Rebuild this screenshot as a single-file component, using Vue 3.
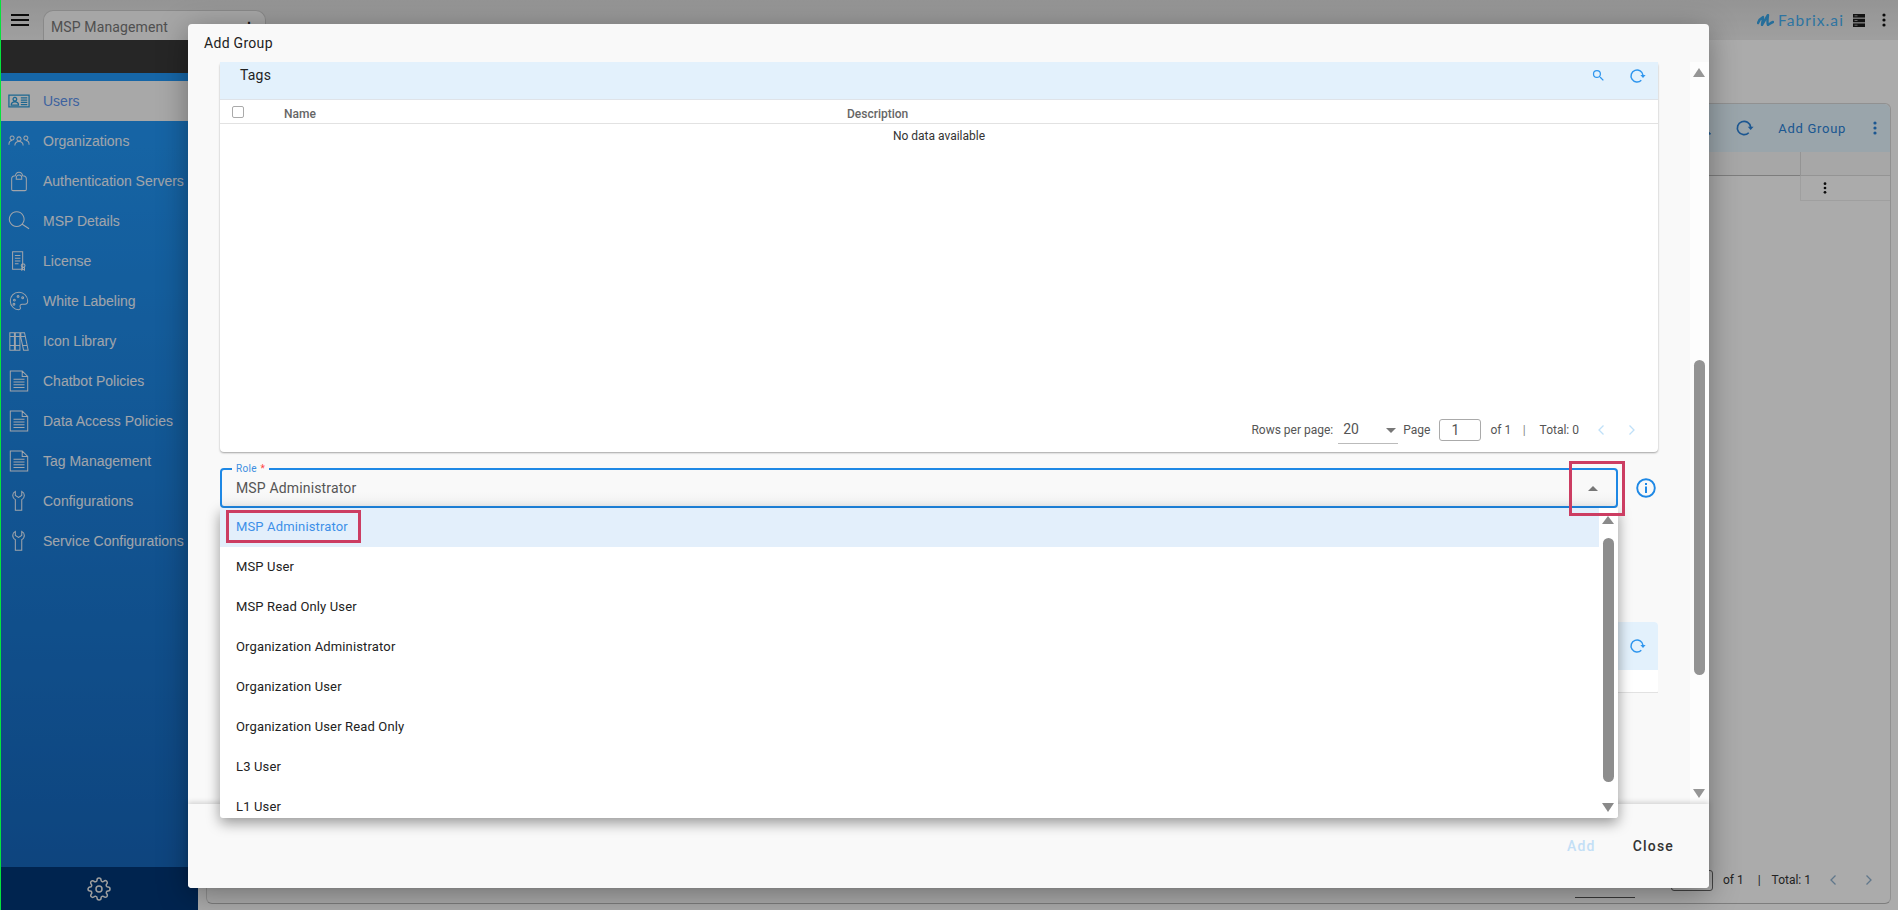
<script setup>
const menu = [
  { label: 'Users', active: true, d: 'M1 5.5h22v13H1z M7.500 8a2 2 0 1 1-.01 0 M3.500 16.500c0-2.500 2-3.500 4-3.500s4 1 4 3.500z M14 8.500h7M14 11h7M14 13.500h7M14 16h7' },
  { label: 'Organizations', d: 'M4.500 6.500a2.200 2.200 0 1 1-.01 0 M1 16c0-3 1.500-4.500 3.500-4.500 M12 7.500a2.300 2.300 0 1 1-.01 0 M7.500 17c0-3 2-4.500 4.500-4.500s4.500 1.500 4.500 4.500 M19.500 6.500a2.200 2.200 0 1 1-.01 0 M19.500 11.500c2 0 3.500 1.500 3.500 4.500' },
  { label: 'Authentication Servers', d: 'M4 9.500C4 7.500 6 6.500 8 6.300 9 1 15 1 16 6.300 18 6.500 20 7.500 20 9.500V21a1.500 1.500 0 0 1-1.500 1.500h-13A1.500 1.500 0 0 1 4 21z M9 8.500a3 3 0 0 1 6 0v1.500h-6z' },
  { label: 'MSP Details', d: 'M9.500 2a8 8 0 1 1-.01 0 M15.500 15.500 L23 20.500' },
  { label: 'License', d: 'M5 2h11v19H5z M7.500 6h6M7.500 9h6M7.500 12h6M7.500 15h4 M16.500 15a2 2 0 1 1-.01 0 M15 19v3l1.500-1 1.500 1v-3' },
  { label: 'White Labeling', d: 'M12 2.500C6 2.500 2.500 7 2.500 12c0 5.500 4.500 9.500 9 9.500 2 0 2.500-1.500 1.800-3-.7-1.700.5-3 2.200-3h3c2 0 3-1.500 3-3.500 0-5.500-4.500-9.500-9.500-9.500z M7 10a1 1 0 1 1-.01 0 M11 6a1 1 0 1 1-.01 0 M16 7.500a1 1 0 1 1-.01 0 M6.500 14.500a1 1 0 1 1-.01 0' },
  { label: 'Icon Library', d: 'M2 3h5v19H2z M8 3h5v19H8z M14 3h4l4 19h-5l-3-14z M2 7h5M8 7h5M14 7h5M2 17h5M8 17h5M16 17h5' },
  { label: 'Chatbot Policies', d: 'M2.500 1h13l6 6v16h-19z M15.500 1v6h6 M6 10h12M6 13h12M6 16h12M6 19h12' },
  { label: 'Data Access Policies', d: 'M2.500 1h13l6 6v16h-19z M15.500 1v6h6 M6 10h12M6 13h12M6 16h12M6 19h12' },
  { label: 'Tag Management', d: 'M2.500 1h13l6 6v16h-19z M15.500 1v6h6 M6 10h12M6 13h12M6 16h12M6 19h12' },
  { label: 'Configurations', d: 'M8 1.500C4.500 3 4 8.500 8 10.500V22h7V10.500C19 8.500 18.500 3 15 1.500V6l-3.500 2L8 6z' },
  { label: 'Service Configurations', d: 'M8 1.500C4.500 3 4 8.500 8 10.500V22h7V10.500C19 8.500 18.500 3 15 1.500V6l-3.500 2L8 6z' }
]
const roles = ['MSP Administrator', 'MSP User', 'MSP Read Only User', 'Organization Administrator', 'Organization User', 'Organization User Read Only', 'L3 User', 'L1 User']
const gear = 'M12 15a3 3 0 1 0 0-6 3 3 0 0 0 0 6z M19.400 15a1.650 1.650 0 0 0 .33 1.820l.06.06a2 2 0 0 1 0 2.830 2 2 0 0 1-2.830 0l-.06-.06a1.650 1.650 0 0 0-1.820-.33 1.650 1.650 0 0 0-1 1.510V21a2 2 0 0 1-2 2 2 2 0 0 1-2-2v-.09A1.650 1.650 0 0 0 9 19.400a1.650 1.650 0 0 0-1.820.33l-.06.06a2 2 0 0 1-2.830 0 2 2 0 0 1 0-2.830l.06-.06a1.650 1.650 0 0 0 .33-1.820 1.650 1.650 0 0 0-1.510-1H3a2 2 0 0 1-2-2 2 2 0 0 1 2-2h.09A1.650 1.650 0 0 0 4.600 9a1.650 1.650 0 0 0-.33-1.820l-.06-.06a2 2 0 0 1 0-2.830 2 2 0 0 1 2.830 0l.06.06a1.650 1.650 0 0 0 1.820.33H9a1.650 1.650 0 0 0 1-1.510V3a2 2 0 0 1 2-2 2 2 0 0 1 2 2v.09a1.650 1.650 0 0 0 1 1.510 1.650 1.650 0 0 0 1.820-.33l.06-.06a2 2 0 0 1 2.830 0 2 2 0 0 1 0 2.830l-.06.06a1.650 1.650 0 0 0-.33 1.820V9a1.650 1.650 0 0 0 1.510 1H21a2 2 0 0 1 2 2 2 2 0 0 1-2 2h-.09a1.650 1.650 0 0 0-1.510 1z'
const ring = 'M17.700 17.700A8 8 0 1 1 20 11'
const ringHead = 'M16.500 10.500h7l-3.500 4z'
const search = 'M15.500 14h-.79l-.28-.27A6.470 6.470 0 0 0 16 9.500 6.500 6.500 0 1 0 9.500 16c1.610 0 3.090-.59 4.230-1.570l.27.28v.79l5 4.990L20.490 19zm-6 0a4.500 4.500 0 1 1 0-9 4.500 4.500 0 0 1 0 9z'
</script>

<template>
  <div class="app">
    <header class="topbar">
      <div class="burger"><i></i><i></i><i></i></div>
      <div class="tab"><span>MSP Management</span><b class="tab-dots">⋮</b></div>
      <div class="brand">
        <svg class="brand-mark" viewBox="0 0 17 12"><path d="M1 9C2 6 4 4 6 3 6 6 5 9 5 11 7 8 9 4 11 1 10.500 5 10 9 11 11 12.500 10 14.500 8.500 16 8" fill="none" stroke="#3aa5e6" stroke-width="2.400" stroke-linecap="round" stroke-linejoin="round" /></svg>
        <span class="brand-name">Fabrix.ai</span>
        <svg class="server" viewBox="0 0 12 13">
          <rect y="0" width="12" height="3.600" fill="#1c1c1c" /><rect y="4.700" width="12" height="3.600" fill="#1c1c1c" /><rect y="9.400" width="12" height="3.600" fill="#1c1c1c" />
          <rect x="1.500" y="1.300" width="3" height="1" fill="#999" /><rect x="1.500" y="6" width="3" height="1" fill="#999" /><rect x="1.500" y="10.700" width="3" height="1" fill="#999" />
        </svg>
        <svg class="kebab" viewBox="0 0 4 14"><circle cx="2" cy="2" r="1.600" /><circle cx="2" cy="7" r="1.600" /><circle cx="2" cy="12" r="1.600" /></svg>
      </div>
    </header>

    <div class="body-row">
      <aside class="sidebar">
        <div class="band"></div>
        <nav class="nav">
          <div v-for="m in menu" :key="m.label" class="nav-item" :class="{ active: m.active }">
            <svg class="nav-icon" viewBox="0 0 24 24"><path :d="m.d" /></svg>
            <span>{{ m.label }}</span>
          </div>
        </nav>
        <div class="side-foot">
          <svg class="gear" viewBox="0 0 24 24"><path :d="gear" /></svg>
        </div>
      </aside>

      <main class="main">
        <section class="bg-card">
          <div class="bg-head">
            <svg class="bg-ic bg-search" viewBox="0 0 24 24"><path :d="search" /></svg>
            <svg class="bg-ic" viewBox="0 0 24 24"><path class="ring" :d="ring" /><path :d="ringHead" /></svg>
            <span class="bg-add">Add Group</span>
            <svg class="bg-dots" viewBox="0 0 4 14"><circle cx="2" cy="2" r="1.600" /><circle cx="2" cy="7" r="1.600" /><circle cx="2" cy="12" r="1.600" /></svg>
          </div>
          <div class="bg-table">
            <div class="bg-col-left">
              <div class="bg-colhead"></div>
            </div>
            <div class="bg-col-action">
              <div class="bg-cell-top"></div>
              <div class="bg-cell"><svg class="row-dots" viewBox="0 0 4 14"><circle cx="2" cy="2" r="1.600" /><circle cx="2" cy="7" r="1.600" /><circle cx="2" cy="12" r="1.600" /></svg></div>
            </div>
          </div>
          <div class="bg-pager">
            <span>Rows per page:</span>
            <span class="bg-sel">20</span>
            <span>Page</span>
            <span class="bg-input">1</span>
            <span>of 1</span>
            <span class="bg-sep">|</span>
            <span>Total: 1</span>
            <span class="bg-arrows">
              <svg viewBox="0 0 8 12"><path d="M6.500 1.500 2 6l4.500 4.500" /></svg>
              <svg viewBox="0 0 8 12"><path d="M1.500 1.500 6 6l-4.500 4.500" /></svg>
            </span>
          </div>
        </section>
      </main>
    </div>

    <div class="overlay"></div>
    <div class="green"></div>

    <div class="modal">
      <div class="modal-title">Add Group</div>
      <div class="modal-body">
        <div class="modal-content">
          <section class="card">
            <div class="card-head">
              <span class="card-title">Tags</span>
              <div class="card-tools">
                <svg class="tool-search" viewBox="0 0 24 24"><path :d="search" /></svg>
                <svg class="tool" viewBox="0 0 24 24"><path class="ring" :d="ring" /><path :d="ringHead" /></svg>
              </div>
            </div>
            <div class="col-row">
              <span class="check"></span>
              <span class="col-name">Name</span>
              <span class="col-desc">Description</span>
            </div>
            <div class="no-data">No data available</div>
            <div class="pager">
              <span>Rows per page:</span>
              <span class="pg-select">20<i class="tri-down"></i></span>
              <span>Page</span>
              <span class="pg-input">1</span>
              <span>of 1</span>
              <span class="pg-sep">|</span>
              <span>Total: 0</span>
              <span class="pg-arrows">
                <svg viewBox="0 0 8 12"><path d="M6.500 1.500 2 6l4.500 4.500" /></svg>
                <svg viewBox="0 0 8 12"><path d="M1.500 1.500 6 6l-4.500 4.500" /></svg>
              </span>
            </div>
          </section>

          <div class="role-row">
            <div class="role-field">
              <span class="role-label">Role <em>*</em></span>
              <span class="role-value">MSP Administrator</span>
              <i class="tri-up"></i>
            </div>
            <svg class="info" viewBox="0 0 20 20">
              <circle cx="10" cy="10" r="8.800" fill="none" stroke="#1e88e5" stroke-width="1.900" />
              <rect x="9" y="8.500" width="2" height="6.500" fill="#1e88e5" />
              <rect x="9" y="5" width="2" height="2" fill="#1e88e5" />
            </svg>
          </div>

          <section class="card card-second">
            <div class="second-head">
              <svg class="tool" viewBox="0 0 24 24"><path class="ring" :d="ring" /><path :d="ringHead" /></svg>
            </div>
            <div class="second-row"></div>
          </section>
        </div>
        <div class="modal-scroll">
          <i class="sb-up"></i>
          <i class="sb-thumb"></i>
          <i class="sb-down"></i>
        </div>
      </div>
      <div class="modal-foot">
        <span class="btn-add">Add</span>
        <span class="btn-close">Close</span>
      </div>

      <div class="dropdown">
        <div class="dd-list">
          <div v-for="(r, i) in roles" :key="r" class="dd-item" :class="{ selected: i === 0 }">
            <span class="dd-text">{{ r }}</span>
          </div>
        </div>
        <div class="dd-scroll">
          <i class="dd-up"></i>
          <i class="dd-thumb"></i>
          <i class="dd-down"></i>
        </div>
      </div>
      <div class="red-box"></div>
    </div>
  </div>
</template>

<style>
html, body { margin: 0; overflow: hidden; }
</style>

<style scoped>
.app { position: relative; width: 1898px; height: 910px; overflow: hidden; background: #fff; font-family: Roboto, sans-serif; display: flex; flex-direction: column; }

.topbar { height: 40px; flex: none; display: flex; align-items: flex-start; background: linear-gradient(#ddd, #eee); }
.burger { width: 18px; margin: 14px 14px 0 11px; display: flex; flex-direction: column; gap: 3px; }
.burger i { height: 2px; background: #111; display: block; }
.tab { width: 223px; height: 30px; margin-top: 10px; box-sizing: border-box; border: 1px solid #ccc; border-bottom: 0; border-radius: 10px 10px 0 0; background: #f8f8f8; display: flex; justify-content: space-between; align-items: center; padding: 2px 9px 0 7px; color: #777; font-size: 14px; letter-spacing: .12px; }
.tab-dots { color: #222; font-size: 14px; }
.brand { margin-left: auto; display: flex; align-items: center; height: 40px; padding-right: 12px; }
.brand-mark { width: 17px; height: 12px; margin-right: 4px; }
.brand-name { font-family: Lato, sans-serif; font-size: 15.500px; letter-spacing: 1.100px; color: #45aef0; }
.server { width: 12px; height: 13px; margin-left: 9px; }
.kebab { width: 4px; height: 14px; margin-left: 17px; fill: #111; }

.body-row { flex: 1; display: flex; min-height: 0; }
.sidebar { width: 198px; flex: none; display: flex; flex-direction: column; background: linear-gradient(#2299fa 5%, #1567bd 95%); }
.band { height: 33px; background: #393939; margin-bottom: 8px; }
.nav { flex: 1; }
.nav-item { height: 40px; display: flex; align-items: center; gap: 13px; padding-left: 8px; font-family: "Liberation Sans", sans-serif; font-size: 14px; color: #f0f6ff; white-space: nowrap; }
.nav-item.active { background: #fbfbfb; color: #5b93ee; }
.nav-icon { width: 22px; height: 22px; flex: none; fill: none; stroke: #f0f6ff; stroke-width: 1.100; }
.nav-item.active .nav-icon { stroke: #2a9ad8; stroke-width: 1.400; }
.side-foot { height: 43px; background: #003676; display: flex; justify-content: center; align-items: center; }
.gear { width: 24px; height: 24px; fill: none; stroke: #eee; stroke-width: 1.500; }

.main { flex: 1; padding: 63px 7px 6px 8px; min-width: 0; display: flex; }
.bg-card { flex: 1; display: flex; flex-direction: column; border-radius: 6px; border: 1px solid #d8d8d8; box-sizing: border-box; border-bottom-color: #bbb; }
.bg-head { height: 48px; background: #e6f6ff; display: flex; align-items: center; justify-content: flex-end; padding-right: 13px; flex: none; border-radius: 6px 6px 0 0; }
.bg-ic { width: 20px; height: 20px; fill: #2b82d8; }
.bg-search { margin-right: 20px; }
.ring { fill: none; stroke: currentColor; stroke-width: 2; }
.bg-ic .ring { stroke: #2b82d8; }
.bg-add { color: #2b82d8; font-size: 13px; letter-spacing: .7px; margin: 0 27px 0 24px; }
.bg-dots { width: 4px; height: 14px; fill: #2b82d8; }
.bg-table { flex: 1; display: flex; min-height: 0; }
.bg-col-left { flex: 1; }
.bg-colhead { height: 23px; border-bottom: 1px solid #bbb; background: #fafafa; }
.bg-col-action { width: 90px; }
.bg-cell-top { height: 23px; background: #fafafa; border-left: 1px solid #ddd; border-bottom: 1px solid #ddd; }
.bg-cell { height: 24px; display: flex; align-items: center; padding-left: 22px; border-left: 1px solid #eee; border-bottom: 1px solid #eee; }
.row-dots { width: 4px; height: 12px; fill: #111; }
.bg-pager { height: 38px; display: flex; align-items: center; justify-content: flex-end; gap: 10px; padding: 0 17px 4px 0; color: #333; font-size: 12px; flex: none; }
.bg-sel { width: 60px; border-bottom: 1px solid #555; height: 26px; margin-bottom: -8px; margin-right: -7px; }
.bg-input { width: 42px; height: 21px; border: 1px solid #666; border-radius: 3px; text-align: center; box-sizing: border-box; margin-left: -4px; }
.bg-sep { margin: 0 1px 0 4px; }
.bg-arrows { display: flex; gap: 28px; margin-left: 8px; }
.bg-arrows svg { width: 8px; height: 12px; fill: none; stroke: #8fb2d0; stroke-width: 1.300; }

.overlay { position: absolute; inset: 0; background: rgba(0, 0, 0, .33); }
.green { position: absolute; left: 0; top: 0; bottom: 0; width: 1px; background: #06e23c; }

.modal { position: absolute; left: 188px; top: 24px; width: 1521px; height: 864px; display: flex; flex-direction: column; background: #f9f9f9; border-radius: 4px; box-shadow: 0 6px 30px rgba(0, 0, 0, .35); overflow: visible; }
.modal-title { height: 38px; flex: none; display: flex; align-items: center; padding-left: 16px; font-size: 14px; letter-spacing: .3px; color: #222; }
.modal-body { flex: 1; min-height: 0; display: flex; overflow: hidden; }
.modal-content { flex: 1; min-width: 0; padding: 0 32px 0 32px; }
.modal-scroll { width: 19px; flex: none; background: #fdfdfd; position: relative; }
.sb-up { position: absolute; left: 3px; top: 6px; border: 6.500px solid transparent; border-top: 0; border-bottom: 9px solid #969696; }
.sb-down { position: absolute; left: 3px; top: 727px; border: 6.500px solid transparent; border-bottom: 0; border-top: 9px solid #969696; }
.sb-thumb { position: absolute; left: 4px; top: 298px; width: 11px; height: 315px; border-radius: 6px; background: #949494; }

.card { background: #fff; border-radius: 4px; box-shadow: 0 1px 2px rgba(0, 0, 0, .35); height: 390px; display: flex; flex-direction: column; }
.card-head { flex: none; background: #e3f1fc; display: flex; justify-content: space-between; border-bottom: 1px solid #dfe3e8; height: 37px; }
.card-title { padding: 4px 0 0 20px; font-size: 14px; letter-spacing: .2px; color: #222; line-height: 18px; }
.card-tools { display: flex; align-items: center; gap: 22px; height: 27px; padding-right: 12px; }
.tool { width: 18px; height: 18px; fill: #2f96ee; }
.tool .ring { stroke: #2f96ee; }
.tool-search { width: 15px; height: 15px; fill: #2f96ee; }
.col-row { flex: none; display: flex; align-items: flex-start; border-bottom: 1px solid #e2e2e2; font-size: 12px; font-weight: 500; color: #666; line-height: 14px; padding-top: 7px; height: 16px; }
.check { width: 12px; height: 12px; border: 1.500px solid #aaa; border-radius: 2px; margin: -1px 0 0 12px; box-sizing: border-box; }
.col-name { margin-left: 40px; width: 563px; }
.no-data { text-align: center; font-size: 12px; color: #333; padding-top: 5px; flex: 1; }
.pager { height: 42px; flex: none; display: flex; align-items: center; justify-content: flex-end; font-size: 12px; color: #555; padding-right: 22px; box-sizing: border-box; padding-bottom: 2px; }
.pg-select { width: 60px; height: 24px; box-sizing: border-box; border-bottom: 1px solid #bbb; margin: 3px 5px 0 5px; padding-left: 5px; display: flex; align-items: flex-start; justify-content: space-between; font-size: 14px; padding-top: 1px; }
.tri-down { border: 5px solid transparent; border-bottom: 0; border-top: 5px solid #777; margin: 7px 2px 0 0; }
.pg-input { width: 42px; height: 22px; box-sizing: border-box; border: 1px solid #aaa; border-radius: 3px; margin: 0 9px; padding-left: 11px; font-size: 14px; line-height: 20px; }
.pg-sep { margin: 0 14px 0 11.500px; color: #888; }
.pg-arrows { display: flex; gap: 23px; margin-left: 18px; }
.pg-arrows svg { width: 8px; height: 12px; fill: none; stroke: #bfe0f8; stroke-width: 1.300; }

.role-row { display: flex; align-items: center; margin-top: 16px; height: 40px; }
.role-field { position: relative; width: 1398px; flex: none; height: 40px; box-sizing: border-box; border: 2px solid #1e88e5; border-radius: 4px; display: flex; align-items: center; padding-left: 14px; background: linear-gradient(#f9f9f9 60%, #f2f2f2); }
.role-label { position: absolute; left: 10px; top: -7px; padding: 0 4px; background: #f9f9f9; font-size: 10px; line-height: 12px; color: #3d8fe0; letter-spacing: .3px; }
.role-label em { color: #f44; font-style: normal; margin-left: 1px; }
.role-value { font-size: 14px; letter-spacing: .15px; color: #555; }
.tri-up { position: absolute; right: 18px; top: 16px; border: 5px solid transparent; border-top: 0; border-bottom: 5px solid #777; }
.info { width: 20px; height: 20px; margin-left: 18px; }

.card-second { margin-top: 114px; height: auto; box-shadow: none; background: #fff; }
.second-head { height: 48px; background: #e3f1fc; border-radius: 4px 4px 0 0; display: flex; justify-content: flex-end; align-items: center; padding-right: 12px; }
.second-row { height: 22px; border-bottom: 1px solid #e2e2e2; }

.modal-foot { height: 84px; flex: none; display: flex; align-items: center; justify-content: flex-end; gap: 37px; padding-right: 35px; font-size: 14px; font-weight: 500; letter-spacing: 1.200px; position: relative; box-shadow: 0 -2px 5px rgba(0, 0, 0, .15); background: #f9f9f9; border-radius: 0 0 4px 4px; }
.btn-add { color: #c3dff6; }
.btn-close { color: #333; }

.dropdown { position: absolute; left: 32px; top: 484px; width: 1398px; height: 310px; background: #fff; box-shadow: 0 5px 14px rgba(0, 0, 0, .4); border-radius: 0 0 3px 3px; display: flex; overflow: hidden; }
.dd-list { flex: 1; min-width: 0; }
.dd-item { height: 40px; padding-left: 6px; font-size: 13px; letter-spacing: .15px; color: #222; display: flex; align-items: center; padding-bottom: 2px; box-sizing: border-box; }
.dd-item.selected { height: 39px; padding-bottom: 0; background: #e3effb; color: #3d8fe8; align-items: flex-start; }
.dd-text { padding: 0 7px; line-height: 27px; border: 3px solid transparent; }
.selected .dd-text { border-color: #cc3d62; margin-top: 2px; padding-right: 10px; }
.dd-scroll { width: 19px; flex: none; position: relative; background: #fff; }
.dd-up { position: absolute; left: 2.500px; top: 8px; border: 6.500px solid transparent; border-top: 0; border-bottom: 8px solid #8a8a8a; }
.dd-thumb { position: absolute; left: 4px; top: 30px; width: 11px; height: 244px; border-radius: 6px; background: #8d8d8d; }
.dd-down { position: absolute; left: 2.500px; top: 295px; border: 6.500px solid transparent; border-bottom: 0; border-top: 9px solid #8a8a8a; }
.red-box { position: absolute; left: 1381px; top: 437px; width: 56px; height: 55px; box-sizing: border-box; border: 3px solid #cc3d62; pointer-events: none; }
</style>
